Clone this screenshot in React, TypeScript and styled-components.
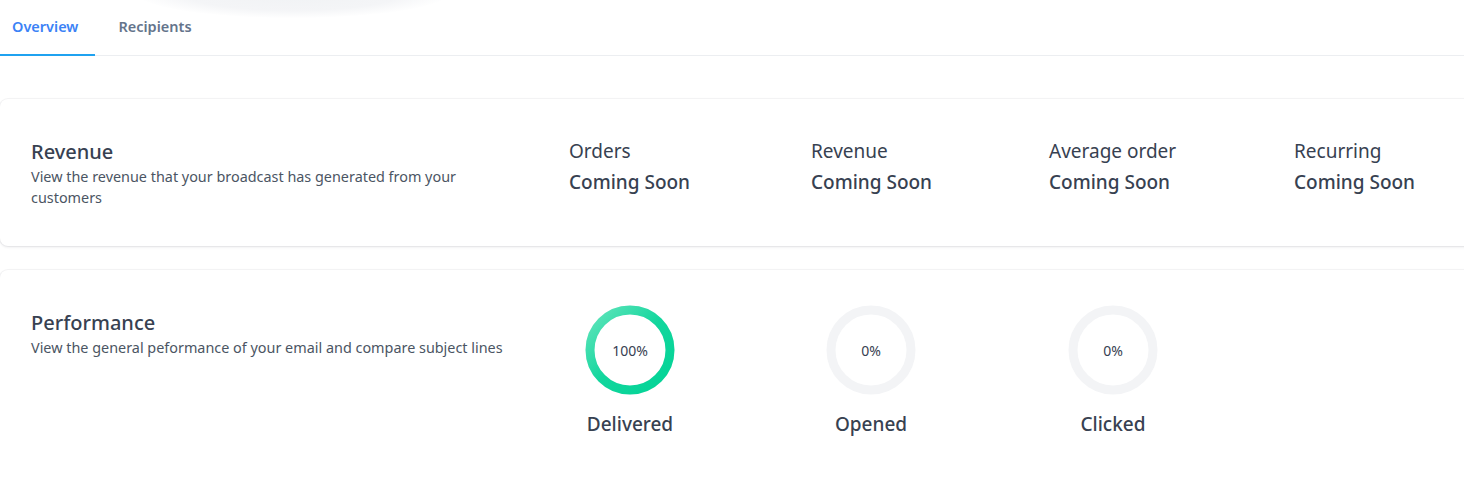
import React from 'react';
import styled, { createGlobalStyle } from 'styled-components';

const GlobalStyle = createGlobalStyle`
  html, body {
    margin: 0;
    padding: 0;
    background: #ffffff;
  }
  body {
    font-family: 'Noto Sans', 'Open Sans', sans-serif;
    color: #374151;
    overflow: hidden;
  }
`;

const Page = styled.div`
  position: relative;
  width: 1464px;
  height: 489px;
  overflow: hidden;
`;

// soft shadow of a floating element above the viewport
const TopGlow = styled.div`
  position: absolute;
  left: 135px;
  top: -34px;
  width: 315px;
  height: 52px;
  border-radius: 50%;
  background: radial-gradient(ellipse at center, #f0f2f4 0%, #f4f5f7 50%, rgba(246, 247, 249, 0) 72%);
  pointer-events: none;
`;

const TabBar = styled.nav`
  display: flex;
  gap: 11px;
  height: 55px;
  border-bottom: 1px solid #eceef1;
`;

const Tab = styled.button<{ active?: boolean }>`
  display: flex;
  align-items: center;
  height: 56px;
  margin-bottom: -1px;
  padding: 0 ${({ active }) => (active ? '17px' : '12px')} 2px 12px;
  border: 0;
  background: none;
  font-family: inherit;
  font-size: 14.5px;
  font-weight: 600;
  color: ${({ active }) => (active ? '#3b82f6' : '#64748b')};
  border-bottom: 2px solid ${({ active }) => (active ? '#1fa2f0' : 'transparent')};
  cursor: pointer;
`;

const Cards = styled.div`
  display: flex;
  flex-direction: column;
  gap: 24px;
  padding-top: 43px;
`;

const Card = styled.section<{ tall?: boolean }>`
  display: flex;
  width: 1490px;
  box-sizing: border-box;
  height: ${({ tall }) => (tall ? '260px' : '147px')};
  padding: 39px 31px;
  background: #fff;
  border-radius: 8px;
  box-shadow: 0 0 0 1px rgba(17, 24, 39, 0.04), 0 1px 3px rgba(17, 24, 39, 0.1);
`;

const Intro = styled.div`
  width: 538px;
  flex-shrink: 0;
`;

const Title = styled.h2`
  margin: 0;
  font-size: 20px;
  font-weight: 500;
  line-height: 28px;
  color: #374151;
`;

const Description = styled.p<{ wide?: boolean }>`
  margin: 0;
  width: ${({ wide }) => (wide ? '520px' : '460px')};
  font-size: 14.4px;
  line-height: 21px;
  color: #4b5563;
`;

const StatGrid = styled.div`
  display: grid;
  grid-template-columns: 242px 238px 245px 200px;
`;

const StatLabel = styled.div`
  font-size: 19px;
  line-height: 27px;
  color: #374151;
`;

const StatValue = styled.div`
  font-size: 19px;
  font-weight: 500;
  line-height: 34px;
  color: #374151;
`;

const RingGrid = styled.div`
  display: grid;
  grid-template-columns: 241px 242px 242px;
  margin-top: -4px;
`;

const RingItem = styled.div`
  display: flex;
  flex-direction: column;
  align-items: center;
  width: 122px;
`;

const RingBox = styled.div`
  position: relative;
  width: 90px;
  height: 90px;
`;

const RingValue = styled.span`
  position: absolute;
  inset: 0;
  display: flex;
  align-items: center;
  justify-content: center;
  font-size: 14px;
  color: #374151;
`;

const RingLabel = styled.div`
  margin-top: 15px;
  font-size: 19px;
  font-weight: 500;
  line-height: 28px;
  color: #374151;
`;

const Ring = ({ value, label }: { value: number; label: string }) => {
  const r = 40;
  const c = 2 * Math.PI * r;
  return (
    <RingItem>
      <RingBox>
        <svg width={90} height={90} viewBox="0 0 90 90">
          <defs>
            <linearGradient id="ringGreen" gradientUnits="userSpaceOnUse" x1="90" y1="0" x2="0" y2="90">
              <stop offset="0%" stopColor="#6ee7c0" />
              <stop offset="50%" stopColor="#12d69d" />
              <stop offset="100%" stopColor="#00d395" />
            </linearGradient>
          </defs>
          <circle cx="45" cy="45" r={r} fill="none" stroke="#f3f4f6" strokeWidth="9" />
          {value > 0 && (
            <circle
              cx="45"
              cy="45"
              r={r}
              fill="none"
              stroke="url(#ringGreen)"
              strokeWidth="9"
              strokeDasharray={`${(c * value) / 100} ${c}`}
              transform="rotate(-90 45 45)"
            />
          )}
        </svg>
        <RingValue>{value}%</RingValue>
      </RingBox>
      <RingLabel>{label}</RingLabel>
    </RingItem>
  );
};

const stats = ['Orders', 'Revenue', 'Average order', 'Recurring'];
const rings = [
  { label: 'Delivered', value: 100 },
  { label: 'Opened', value: 0 },
  { label: 'Clicked', value: 0 },
];

export default function App() {
  return (
    <Page>
      <GlobalStyle />
      <TabBar>
        <Tab active>Overview</Tab>
        <Tab>Recipients</Tab>
      </TabBar>
      <TopGlow />
      <Cards>
        <Card>
          <Intro>
            <Title>Revenue</Title>
            <Description>View the revenue that your broadcast has generated from your customers</Description>
          </Intro>
          <StatGrid>
            {stats.map((s) => (
              <div key={s}>
                <StatLabel>{s}</StatLabel>
                <StatValue>Coming Soon</StatValue>
              </div>
            ))}
          </StatGrid>
        </Card>
        <Card tall>
          <Intro>
            <Title>Performance</Title>
            <Description wide>View the general peformance of your email and compare subject lines</Description>
          </Intro>
          <RingGrid>
            {rings.map((r) => (
              <Ring key={r.label} value={r.value} label={r.label} />
            ))}
          </RingGrid>
        </Card>
      </Cards>
    </Page>
  );
}
